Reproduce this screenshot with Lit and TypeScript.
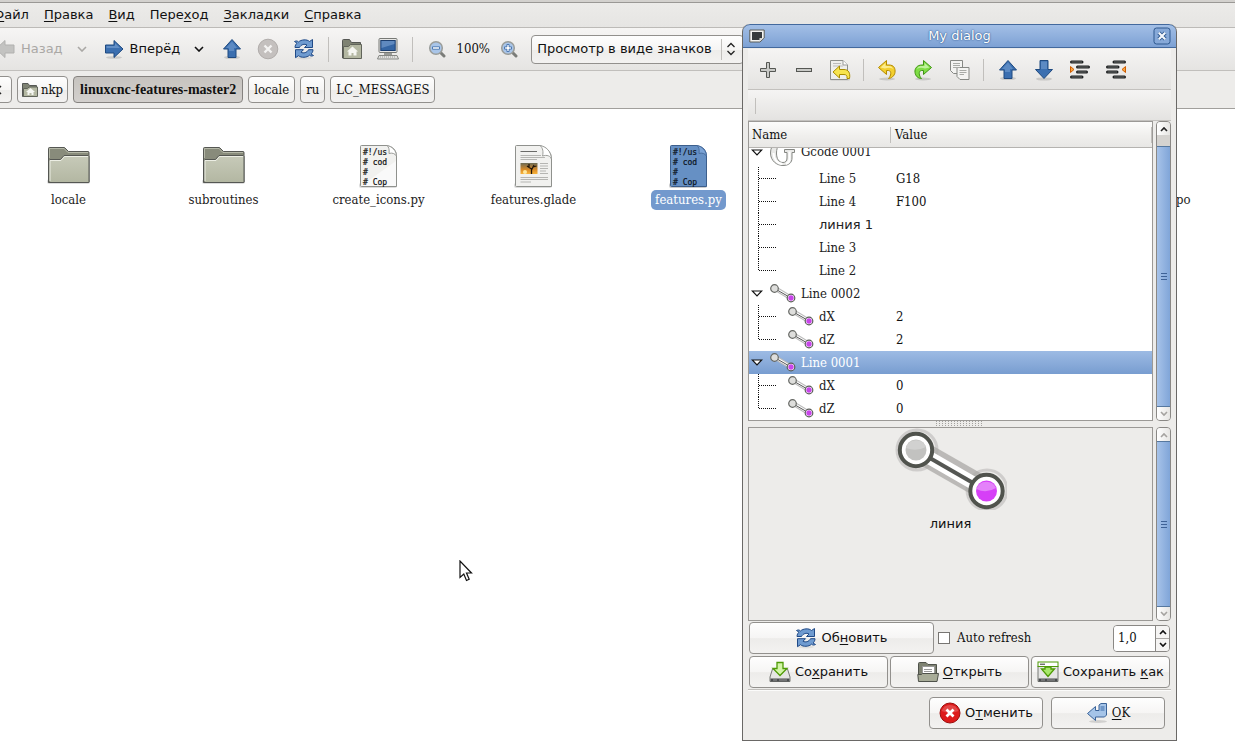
import { LitElement, html, css, svg, nothing, TemplateResult } from "lit";
import { customElement, property } from "lit/decorators.js";
import { classMap } from "lit/directives/class-map.js";

const blueArrow = "fill:#3b6fb0;stroke:#1f4a80;stroke-linejoin:round";

const glyphs: Record<string, { w: number; h: number; body: TemplateResult }> = {
  back: { w: 20, h: 20, body: svg`<path d="M1 10 10 1.500V6H19V14H10V18.500Z" fill="#c3c3c1" stroke="#b1b1af"/>` },
  forward: { w: 20, h: 20, body: svg`<ellipse cx="10" cy="18.500" rx="8" ry="1.300" fill="#0002"/><path d="M19 10 10 1.500V6H1.500V14H10V18.500Z" style=${blueArrow}/><path d="M2.500 7H11V4L16 9H2.500Z" fill="#7da5d6" opacity=".6"/>` },
  up: { w: 22, h: 22, body: svg`<ellipse cx="11" cy="19.500" rx="8" ry="1.600" fill="#0002"/><path d="M11 1.500 19.500 11H15V19.500H7V11H2.500Z" style=${blueArrow}/><path d="M11 3.500 16 10H13V13H8V10H5Z" fill="#7da5d6" opacity=".5"/>` },
  down: { w: 22, h: 22, body: svg`<ellipse cx="11" cy="20" rx="8" ry="1.600" fill="#0002"/><path d="M11 19.500 19.500 10.500H15V1.500H7V10.500H2.500Z" style=${blueArrow}/><path d="M8 2.500H14V10H8Z" fill="#7da5d6" opacity=".5"/>` },
  chevron: { w: 10, h: 6, body: svg`<path d="M1 1 5 5 9 1" fill="none" stroke="currentColor" stroke-width="1.600"/>` },
  stop: { w: 22, h: 22, body: svg`<circle cx="11" cy="11" r="9.800" fill="#c4c0be" stroke="#b0acaa"/><path d="M7.500 7.500 14.500 14.500M14.500 7.500 7.500 14.500" stroke="#f4f3f2" stroke-width="2.400"/>` },
  reload: { w: 22, h: 22, body: svg`<ellipse cx="11" cy="20" rx="8" ry="1.500" fill="#0001"/><g fill="#6f9bd0" stroke="#204a87" stroke-linejoin="round"><path d="M1.500 3.500C3.500 2.500 4.500 3 5.500 4 8 1.500 14 1 16.500 3.500L19.500 1.500V9.500H11.500L14 7C11.500 5.500 8 6.500 6.500 9.500H2C2 7.500 3 6 4 5.200Z"/><path d="M20.500 17.500C18.500 18.500 17.500 18 16.500 17.200 14 19.700 8 20 5.500 17.700L2.500 19.700V11.700H10.500L8 14.200C10.500 15.700 14 14.700 15.500 11.700H20C20 13.700 19 15.200 18 16Z"/></g>` },
  home: { w: 22, h: 22, body: svg`<path d="M1.500 20V2.500Q1.500 1.500 2.500 1.500H8.500L10.500 4.500H19.500V20Z" fill="#7e8272" stroke="#555753"/><path d="M2.500 20.500V8.500H7.500L9.500 6.500H20.500V20.500Z" fill="#b4b8a2" stroke="#61645a"/><path d="M11.500 8.500 17 13.500H15.500V17.500H12.500V15H10.500V17.500H7.500V13.500H6Z" fill="#f5f6f1"/>` },
  homeSmall: { w: 16, h: 16, body: svg`<path d="M.5 14.500V1.500H6L7.500 3.500H14.500V14.500Z" fill="#7e8272" stroke="#555753"/><path d="M1.500 14.500V6.500H5.500L7 5H15.500V14.500Z" fill="#b4b8a2" stroke="#61645a"/><path d="M8.500 6 13 10H11.500V13H9.500V11H7.500V13H5.500V10H4Z" fill="#f5f6f1"/>` },
  computer: { w: 24, h: 24, body: svg`<rect x="3" y="1.500" width="18" height="14" rx="1" fill="#e8e8e6" stroke="#777975"/><rect x="4.800" y="3.500" width="14.400" height="10" fill="#3465a4" stroke="#1d3f70"/><path d="M5.500 4H18.500V7L5.500 11Z" fill="#7da1d2" opacity=".6"/><path d="M8 16H16V18H8Z" fill="#999b97"/><path d="M3 18.500H21L22.500 22H1.500Z" fill="#e2e2e0" stroke="#868884"/><path d="M4 20H20" stroke="#9a9c98" stroke-dasharray="1 1"/>` },
  zoomOut: { w: 18, h: 18, body: svg`<path d="M11.500 11.500 16 16" stroke="#7b7d79" stroke-width="3" stroke-linecap="round"/><circle cx="8" cy="8" r="6.300" fill="#a9c5e8" stroke="#9b9d99" stroke-width="1.500"/><path d="M4.500 6.800H11.500V9.200H4.500Z" fill="#fff" stroke="#3465a4" stroke-width=".8"/>` },
  zoomIn: { w: 18, h: 18, body: svg`<path d="M11.500 11.500 16 16" stroke="#7b7d79" stroke-width="3" stroke-linecap="round"/><circle cx="8" cy="8" r="6.300" fill="#a9c5e8" stroke="#9b9d99" stroke-width="1.500"/><path d="M6.900 4.500H9.100V6.900H11.500V9.100H9.100V11.500H6.900V9.100H4.500V6.900H6.900Z" fill="#fff" stroke="#3465a4" stroke-width=".8"/>` },
  updown: { w: 10, h: 14, body: svg`<path d="M1.500 5 5 1.500 8.500 5M1.500 9 5 12.500 8.500 9" fill="none" stroke="#222" stroke-width="1.300"/>` },
  left: { w: 6, h: 10, body: svg`<path d="M5 1 1 5 5 9" fill="none" stroke="#222" stroke-width="1.500"/>` },
  folder: { w: 48, h: 48, body: svg`<defs><linearGradient id="f" x1="0" y1="0" x2="0" y2="1"><stop offset="0" stop-color="#c7cab9"/><stop offset="1" stop-color="#b3b7a2"/></linearGradient></defs><rect x="2" y="38" width="43" height="5" rx="2.500" fill="#0002"/><path d="M3.500 41.500V7.500Q3.500 6.500 4.500 6.500H19.500L23.500 10.500H43Q44 10.500 44 11.500V41.500Z" fill="#888b7b" stroke="#555753"/><path d="M4.500 17V7.500H19L23 11.500H43" fill="none" stroke="#b5b8a8"/><path d="M4 41.500V19.500L5 18.500H15.500L19 14.500H43L44 15.500V40.500L43 41.500Z" fill="url(#f)" stroke="#555753"/><path d="M5 40V19.500H16L19.500 15.500H43" fill="none" stroke="#eceee4"/>` },
  script: { w: 48, h: 48, body: svg`<rect x="4" y="42" width="38" height="5" rx="2" fill="#0002"/><path d="M6.500 4.500H32Q41.500 6.500 41.500 15V45.500H6.500Q5.500 45.500 5.500 44.500V5.500Q5.500 4.500 6.500 4.500Z" fill="#f1f1ef" stroke="#8f918d"/><path d="M6 45 41 20V45Z" fill="#fff" opacity=".6"/><path d="M32 4.500C34 6 34.500 9 34 12.500 37 11.500 40 12.500 41.500 15 41 9 37 5.500 32 4.500Z" fill="#fff" stroke="#9c9e9a"/><g font-family="DejaVu Sans Mono,monospace" font-size="8" fill="#111" stroke="#111" stroke-width=".2"><text x="8" y="14">#!/us</text><text x="8" y="24"># cod</text><text x="8" y="34">#</text><text x="8" y="44"># Cop</text></g>` },
  scriptSelected: { w: 48, h: 48, body: svg`<rect x="4" y="42" width="38" height="5" rx="2" fill="#0003"/><path d="M6.500 4.500H32Q41.500 6.500 41.500 15V45.500H6.500Q5.500 45.500 5.500 44.500V5.500Q5.500 4.500 6.500 4.500Z" fill="#6690c4" stroke="#3d5f8c"/><path d="M32 4.500C34 6 34.500 9 34 12.500 37 11.500 40 12.500 41.500 15 41 9 37 5.500 32 4.500Z" fill="#7ba3d6" stroke="#4a6f9f"/><g font-family="DejaVu Sans Mono,monospace" font-size="8" fill="#0c141e" stroke="#0c141e" stroke-width=".2"><text x="8" y="14">#!/us</text><text x="8" y="24"># cod</text><text x="8" y="34">#</text><text x="8" y="44"># Cop</text></g>` },
  document: { w: 48, h: 48, body: svg`<defs><linearGradient id="s" x1="0" y1="0" x2="0" y2="1"><stop offset="0" stop-color="#6b6a55"/><stop offset=".6" stop-color="#d98b27"/><stop offset="1" stop-color="#f9b53a"/></linearGradient></defs><rect x="4" y="42" width="38" height="5" rx="2" fill="#0002"/><path d="M6.500 4.500H30Q41.500 8 41.500 18V45.500H6.500Q5.500 45.500 5.500 44.500V5.500Q5.500 4.500 6.500 4.500Z" fill="#f1f1ef" stroke="#8f918d"/><path d="M30 4.500C33 7 33.500 11 32.500 15 37 13.500 40.500 15 41.500 18 41 10 36 5.500 30 4.500Z" fill="#fff" stroke="#9c9e9a"/><path d="M10.500 10.500H27" stroke="#6a6a68"/><path d="M10.500 14.500H31M10.500 16.500H35M10.500 18.500H27M30 22.500H38M30 25H38M30 27.500H38M30 30H36M30 32.500H38M10.500 36.500H38M10.500 38.500H38M10.500 41H21" stroke="#b5b5b2"/><rect x="10.500" y="22" width="17" height="11" fill="url(#s)"/><circle cx="15" cy="31" r="2" fill="#ffe9a0"/><path d="M21.500 33V28L17 25M21.500 29 24 24M23 26 26.500 25M19 26.500V23" stroke="#22160a" stroke-width="1.300" fill="none"/>` },
  window: { w: 16, h: 14, body: svg`<path d="M.8 1H15.200V9L11 13H.8Z" fill="#f3f3f1" stroke="#5b5d59"/><path d="M3 3H13V8.500L10.500 11H3Z" fill="#363a3c"/><path d="M10.500 12.500V9H14.500Z" fill="#d5d6d2"/>` },
  close: { w: 18, h: 18, body: svg`<rect x="1" y="1" width="16" height="16" rx="2.500" fill="#87a9d8" stroke="#2f588f"/><path d="M5.800 5.800 12.200 12.200M12.200 5.800 5.800 12.200" stroke="#2f588f" stroke-width="4"/><path d="M5.800 5.800 12.200 12.200M12.200 5.800 5.800 12.200" stroke="#f5f8fc" stroke-width="2.200"/>` },
  plus: { w: 22, h: 22, body: svg`<path d="M9.500 3.500H12.500V9.500H18.500V12.500H12.500V18.500H9.500V12.500H3.500V9.500H9.500Z" fill="#c9cac7" stroke="#555753"/>` },
  minus: { w: 22, h: 22, body: svg`<rect x="3.500" y="9.500" width="15" height="3" fill="#c9cac7" stroke="#555753"/>` },
  revert: { w: 22, h: 22, body: svg`<rect x="1" y="18" width="20" height="3.500" rx="1.500" fill="#0002"/><path d="M1.500 1.500H14L18.500 6V20.500H1.500Z" fill="#eeeeec" stroke="#8d8f8b"/><path d="M4 4.500H12M4 7H14" stroke="#bbb"/><path d="M14 1.500V6H18.500" fill="#fff" stroke="#999"/><path d="M4 13 10.500 7V10.500H15C19.500 10.500 21.500 14 20.500 19.500L18 19.500C18.500 16.500 17 15.500 15 15.500H10.500V19Z" fill="#f7e44e" stroke="#a98c00" stroke-linejoin="round"/>` },
  undo: { w: 22, h: 22, body: svg`<ellipse cx="10" cy="20" rx="8" ry="1.500" fill="#0002"/><path d="M1.500 8.500 9.500 1.500V6H12C17 6 18.500 9.500 18 13.500 17.500 17 14 19.500 11.500 19.500 14 17 15 12 11.500 11.500H9.500V15.500Z" fill="#f3cf2f" stroke="#b38a00" stroke-linejoin="round"/><path d="M3.500 8.500 8.500 4V7H12Q15 7 16 10Q13 8 8 9.500Z" fill="#fdf2a6" opacity=".8"/>` },
  redo: { w: 22, h: 22, body: svg`<ellipse cx="10" cy="20" rx="8" ry="1.500" fill="#0002"/><path d="M18.500 8.500 10.500 1.500V6H9C4 6 1.500 9.500 2 13.500 2.500 17 5 19.500 8.500 19.500 6 17 5 12 8.500 11.500H10.500V15.500Z" fill="#7fdd45" stroke="#3f9412" stroke-linejoin="round"/><path d="M16.500 8.500 11.500 4V7H8Q5 7 4 10Q7 8 12 9.500Z" fill="#d0f7b0" opacity=".8"/>` },
  copy: { w: 22, h: 22, body: svg`<g fill="#f4f4f2" stroke="#868884"><path d="M1.500 1.500H13.500V14.500H4.500L1.500 11.500Z"/><path d="M8 8.500H20V20.500H11L8 17.500Z"/></g><path d="M4 4.500H11M4 6.500H11M4 8.500H11M10.500 11.500H17.500M10.500 13.500H17.500M10.500 15.500H15" stroke="#a9aba7"/>` },
  indent: { w: 22, h: 22, body: svg`<g stroke="#1c1e1f" stroke-width="3" stroke-linecap="round"><path d="M2.500 3H13M8.500 8H19.500M8.500 13H17.500M2.500 18H13"/></g><g stroke="#6b6e6f"><path d="M2.500 3H13M8.500 8H19.500M8.500 13H17.500M2.500 18H13"/></g><path d="M1.500 7.500 5 10.500 1.500 13.500Z" fill="#f9a53e" stroke="#ce5c00"/>` },
  outdent: { w: 22, h: 22, body: svg`<g stroke="#1c1e1f" stroke-width="3" stroke-linecap="round"><path d="M9 3H19.500M2.500 8H13M2.500 13H12M9 18H19.500"/></g><g stroke="#6b6e6f"><path d="M9 3H19.500M2.500 8H13M2.500 13H12M9 18H19.500"/></g><path d="M20.500 7.500 17 10.500 20.500 13.500Z" fill="#f9a53e" stroke="#ce5c00"/>` },
  expander: { w: 12, h: 8, body: svg`<path d="M1.200 1H10.800L6 6Z" fill="#fff" stroke="#111" stroke-width="1.200"/>` },
  gcode: { w: 26, h: 26, body: svg`<path d="M17.500 1.500C8 -2 .5 4 .5 13 .5 21 7 25.500 13 25.500 19 25.500 22 22.500 22 18V12.500H24.500V9.500H14.500V12.500H17V18C17 21 15.500 22.500 13 22.500 9 22.500 6.500 19 6.500 13 6.500 6 10 3 15.500 5Z" fill="#e9e9e7" stroke="#858783"/><path d="M3.500 13C3.500 19 7 23.500 12.500 24M19.500 11.500V19C19.500 21 18 23 16 24" fill="none" stroke="#fff" stroke-width="2"/>` },
  line: { w: 26, h: 20, body: svg`<path d="M4.500 4 21 14" stroke="#bbb" stroke-width="4.500"/><path d="M4.500 4 21 14" stroke="#fff" stroke-width="2.600"/><path d="M4.500 4.500 21 14" stroke="#555" stroke-width="1"/><circle cx="4.500" cy="4.500" r="3.800" fill="#dededc" stroke="#666864" stroke-width="1.200"/><circle cx="21" cy="14" r="3.800" fill="#fff" stroke="#5a5c58" stroke-width="1.200"/><circle cx="21" cy="14" r="2.700" fill="#c845ea"/>` },
  lineBig: { w: 112, h: 82, body: svg`<g stroke="#bbb9b7" fill="none"><circle cx="22" cy="22" r="20" stroke-width="3" opacity=".6"/><circle cx="92" cy="62" r="20" stroke-width="3" opacity=".6"/><path d="M22 22 92 62" stroke-width="23" stroke="#aaa8a6" opacity=".75"/></g><path d="M21 22 92 63" stroke="#fff" stroke-width="13"/><path d="M21 22 92 63" stroke="#555753" stroke-width="4"/><g stroke="#50534d" stroke-width="4" fill="#fff"><circle cx="21" cy="22" r="16.200"/><circle cx="91.500" cy="63" r="16.200"/></g><circle cx="21" cy="22" r="10.500" fill="#c2c2c0"/><circle cx="91.500" cy="63" r="10.500" fill="#d63ff7"/><path d="M11 20A10.500 10.500 0 0 1 31 19Q21 24 11 20Z" fill="#fff" opacity=".25"/><path d="M81.500 61A10.500 10.500 0 0 1 101 60Q91 66 81.500 61Z" fill="#fff" opacity=".35"/>` },
  grip: { w: 48, h: 6, body: svg`<path d="M0 .5H48M0 2.500H48M0 4.500H48" stroke="#a3a19e" stroke-dasharray="1 2"/>` },
  save: { w: 22, h: 22, body: svg`<path d="M3.500 8H18.500L21 16V20.500H1V16Z" fill="#e5e5e3" stroke="#777975"/><path d="M1.500 17.500H20.500V20.500H1.500Z" fill="#4a4d4f"/><path d="M4 19H8M10 19H18" stroke="#999"/><path d="M8 1.500H14V7.500H18L11 14.500 4 7.500H8Z" fill="#d3f5a8" stroke="#4e9a06" stroke-width="1.300"/>` },
  saveAs: { w: 22, h: 22, body: svg`<path d="M1 5V20.500H21V5Z" fill="#e5e5e3" stroke="#777975"/><path d="M1.500 17.500H20.500V20.500H1.500Z" fill="#4a4d4f"/><path d="M4 19H8M10 19H18" stroke="#999"/><rect x="1" y="1" width="20" height="4.500" fill="#fff" stroke="#4e9a06"/><path d="M3 3.200H8" stroke="#333"/><path d="M4.500 8H8V6H14V8H17.500L11 15.500Z" fill="#a8e86a" stroke="#4e9a06" stroke-width="1.300"/>` },
  open: { w: 22, h: 22, body: svg`<path d="M1.500 18V2.500Q1.500 1.500 2.500 1.500H9L11 3.500H19.500V16H1.500Z" fill="#7e8272" stroke="#4f524b"/><rect x="5.500" y="5.500" width="12" height="11" fill="#fff" stroke="#999"/><path d="M7 8.500H15M7 10.500H15" stroke="#999"/><path d="M1.500 20.500 .8 13.500H4.500L5.500 12.500H21.500L20 20.500Z" fill="#a8ac98" stroke="#4f524b"/>` },
  cancel: { w: 22, h: 22, body: svg`<circle cx="11" cy="11" r="10" fill="#dd1a1a" stroke="#9c0d0d"/><path d="M2.500 9A9 9 0 0 1 19.500 9Q11 12 2.500 9Z" fill="#fff" opacity=".2"/><path d="M7.500 7.500 14.500 14.500M14.500 7.500 7.500 14.500" stroke="#fff" stroke-width="2.800"/>` },
  ok: { w: 22, h: 22, body: svg`<ellipse cx="12" cy="19.500" rx="9" ry="1.500" fill="#0002"/><path d="M1.500 11.500 9.500 4.500V8.500H13V3L15 1.500H20.500V13L18.500 15H9.500V18.500Z" fill="#a5c4e8" stroke="#3a6398" stroke-linejoin="round"/><path d="M14.500 4H18.500V9H14.500Z" fill="#6f97c8"/>` },
  cursor: { w: 14, h: 22, body: svg`<path d="M1 1V17.500L4.800 14 7.500 20.500 10.200 19.200 7.500 13H12.500Z" fill="#fff" stroke="#111" stroke-width="1.200"/>` },
  arrowUp: { w: 8, h: 6, body: svg`<path d="M1 5 4 2 7 5" fill="none" stroke="currentColor" stroke-width="1.600"/>` },
  arrowDown: { w: 8, h: 6, body: svg`<path d="M1 1 4 4 7 1" fill="none" stroke="currentColor" stroke-width="1.600"/>` },
  branch: { w: 27, h: 23, body: svg`<path d="M9.500 0V23M10 11.500H27" stroke="#111" stroke-dasharray="1 1" fill="none"/>` },
  branchEnd: { w: 27, h: 23, body: svg`<path d="M9.500 0V12M10 11.500H27" stroke="#111" stroke-dasharray="1 1" fill="none"/>` },
};

const icon = (name: string) => {
  const g = glyphs[name];
  return html`<svg width=${g.w} height=${g.h} viewBox="0 0 ${g.w} ${g.h}" aria-hidden="true">${g.body}</svg>`;
};

/** Renders a label whose mnemonic letter is preceded by an underscore. */
const mnemonic = (label: string) => {
  const i = label.indexOf("_");
  return i < 0 ? label : html`${label.slice(0, i)}<u>${label[i + 1]}</u>${label.slice(i + 2)}`;
};

const shared = css`
  * { box-sizing: border-box; }
  svg { display: block; flex: none; }
  button, select, input { font: inherit; color: inherit; margin: 0; }
  button { display: flex; align-items: center; justify-content: center; padding: 0; white-space: nowrap; }
  .sans { font: 13px/20px "DejaVu Sans", sans-serif; }
  u { text-underline-offset: 2px; text-decoration-thickness: 1px; }
  .flat { border: 0; background: none; }
  .raised {
    border: 1px solid #92908d;
    border-radius: 4px;
    background: linear-gradient(#fefefe, #f6f5f4 50%, #edecea 52%, #f3f2f1);
  }
`;

@customElement("scroll-bar")
class ScrollBar extends LitElement {
  @property({ type: Number }) lead = 0;
  @property({ type: Boolean }) inactive = false;

  static styles = [shared, css`
    :host { display: flex; flex-direction: column; width: 15px; border: 1px solid #8a8885; border-radius: 4px; background: #d5d3d0; overflow: hidden; }
    .step { height: 13px; border: 0; background: linear-gradient(90deg, #fff, #e6e5e3); color: #222; flex: none; }
    .step.dim { color: #a5a3a0; }
    .thumb { flex: 1; display: flex; flex-direction: column; align-items: center; justify-content: center; gap: 2px; border: solid #56789f; border-width: 1px 0; background: linear-gradient(90deg, #a7c3e9, #80a5d8); }
    .grip { width: 6px; height: 1px; background: #3f6296; }
  `];

  render() {
    return html`
      <button class=${classMap({ step: true, dim: this.inactive })} aria-label="Вверх">${icon("arrowUp")}</button>
      <div style="height:${this.lead}px"></div>
      <div class="thumb"><span class="grip"></span><span class="grip"></span><span class="grip"></span></div>
      <button class="step dim" aria-label="Вниз">${icon("arrowDown")}</button>`;
  }
}

interface Row { name: string; value?: string; icon?: string; child?: boolean; last?: boolean; selected?: boolean; sans?: boolean; clipped?: boolean; }

const rows: Row[] = [
  { name: "Gcode 0001", icon: "gcode", clipped: true },
  { name: "Line 5", value: "G18", child: true },
  { name: "Line 4", value: "F100", child: true },
  { name: "линия 1", child: true, sans: true },
  { name: "Line 3", child: true },
  { name: "Line 2", child: true, last: true },
  { name: "Line 0002", icon: "line" },
  { name: "dX", value: "2", icon: "line", child: true },
  { name: "dZ", value: "2", icon: "line", child: true, last: true },
  { name: "Line 0001", icon: "line", selected: true },
  { name: "dX", value: "0", icon: "line", child: true },
  { name: "dZ", value: "0", icon: "line", child: true, last: true },
];

@customElement("feature-dialog")
class FeatureDialog extends LitElement {
  static styles = [shared, css`
    :host { display: flex; flex-direction: column; background: #edecea; border: 1px solid #6a6866; border-top: 0; border-radius: 8px 8px 0 0; overflow: hidden; }
    .title { display: grid; grid-template-columns: 28px 1fr 28px; align-items: center; justify-items: center; height: 24px; margin: 0 -1px; border: 1px solid #43699d; border-radius: 8px 8px 0 0; background: linear-gradient(#a3bfe6, #7da1d4); color: #fff; }
    .title h1 { margin: 0; font-weight: 400; text-shadow: 0 0 1px #2f588f, 0 0 2px #2f588f; }
    .body { flex: 1; display: flex; flex-direction: column; padding: 1px 5px 11px; min-height: 0; }
    .tools { display: flex; align-items: center; height: 41px; padding: 1px 0 0 2px; border-bottom: 1px solid #c3c1be; background: linear-gradient(#f5f4f3, #e4e3e1); }
    .tools button { width: 36px; height: 36px; }
    .tools.slim { height: 31px; }
    .sep { width: 1px; height: 22px; margin: 0 6px 0 5px; background: #c1bfbc; }
    .slim .sep { height: 16px; }
    .pane { display: flex; gap: 3px; }
    .view { flex: 1; border: 1px solid #9b9996; min-width: 0; }
    .tree { background: #fff; }
    table { width: 100%; border-collapse: separate; border-spacing: 0; table-layout: fixed; }
    th { height: 26px; padding: 0; text-align: left; font-weight: 400; border-bottom: 1px solid #b5b3b0; background: linear-gradient(#fcfcfb, #f0efed 55%, #e8e7e5); }
    th:first-child { width: 142px; }
    th span { display: block; padding-left: 3px; border-right: 1px solid #c1bfbc; line-height: 16px; }
    th + th span { padding-left: 4px; }
    td { padding: 0; line-height: 20px; }
    .value { padding-left: 5px; }
    .node { display: flex; align-items: center; height: 23px; }
    .clipped { height: 19px; align-items: flex-end; overflow: hidden; }
    .clipped > .pic { margin-bottom: 1px; }
    .clipped > .twist { margin-bottom: 10px; }
    .clipped > .label { margin-bottom: 5px; }
    .twist { width: 21px; padding-left: 2px; }
    .label { padding-left: 4px; color: #222; }
    .pic { width: 27px; }
    .child .pic { width: 39px; padding-left: 12px; }
    .selected { background: linear-gradient(#9dbbe4, #789dd0); }
    .selected .label { color: #fff; }
    .handle { align-self: center; }
    .preview { flex: 1; min-height: 0; }
    .preview .view { display: flex; flex-direction: column; align-items: center; gap: 4px; }
    .form { display: flex; align-items: center; padding: 0 1px; margin-top: 1px; }
    .form .raised { width: 185px; }
    .raised { height: 32px; gap: 4px; }
    .check { display: flex; align-items: center; gap: 7px; margin-left: 4px; flex: 1; }
    .check input { appearance: none; width: 12px; height: 12px; border: 1px solid #777572; background: #fff; }
    .spin { display: flex; height: 27px; border: 1px solid #8a8885; border-radius: 4px; overflow: hidden; }
    .spin input { width: 41px; border: 0; padding: 0 4px; background: #fff; }
    .arrows { display: flex; flex-direction: column; width: 14px; border-left: 1px solid #8a8885; background: #f5f4f3; }
    .arrows button { flex: 1; height: auto; border: 0; background: none; }
    .arrows button + button { border-top: 1px solid #a9a7a4; }
    .files { display: grid; grid-template-columns: repeat(3, 1fr); gap: 2px; padding: 0 1px; margin-top: 2px; }
    .actions { display: flex; justify-content: flex-end; gap: 8px; margin-top: 1px; padding: 7px 6px 0; border-top: 1px solid #c1bfbc; box-shadow: inset 0 1px #fbfbfa; }
    .actions .raised { width: 114px; }
  `];

  private tool(name: string, label: string) {
    return html`<button class="flat" aria-label=${label}>${icon(name)}</button>`;
  }

  private row(r: Row) {
    const lead = r.child
      ? html`${icon(r.last ? "branchEnd" : "branch")}<span class="pic">${r.icon ? icon(r.icon) : nothing}</span>`
      : html`<span class="twist">${icon("expander")}</span><span class="pic">${icon(r.icon!)}</span>`;
    return html`<tr class=${classMap({ selected: !!r.selected })}>
      <td><div class=${classMap({ node: true, child: !!r.child, clipped: !!r.clipped })}>
        ${lead}<span class=${classMap({ label: true, sans: !!r.sans })}>${r.name}</span></div></td>
      <td class="value">${r.value ?? nothing}</td></tr>`;
  }

  render() {
    return html`
      <div class="title">${icon("window")}<h1 class="sans">My dialog</h1><button class="flat" aria-label="Закрыть">${icon("close")}</button></div>
      <div class="body">
        <div class="tools">
          ${this.tool("plus", "Добавить")}${this.tool("minus", "Удалить")}${this.tool("revert", "Вернуть")}
          <span class="sep"></span>
          ${this.tool("undo", "Отменить действие")}${this.tool("redo", "Повторить")}${this.tool("copy", "Копировать")}
          <span class="sep"></span>
          ${this.tool("up", "Выше")}${this.tool("down", "Ниже")}${this.tool("indent", "Увеличить отступ")}${this.tool("outdent", "Уменьшить отступ")}
        </div>
        <div class="tools slim"><span class="sep"></span></div>
        <div class="pane">
          <div class="view tree">
            <table>
              <thead><tr><th><span>Name</span></th><th><span>Value</span></th></tr></thead>
              <tbody>${rows.map((r) => this.row(r))}</tbody>
            </table>
          </div>
          <scroll-bar .lead=${11}></scroll-bar>
        </div>
        <div class="handle">${icon("grip")}</div>
        <div class="pane preview">
          <div class="view">${icon("lineBig")}<span class="sans">линия</span></div>
          <scroll-bar inactive></scroll-bar>
        </div>
        <div class="form">
          <button class="raised sans">${icon("reload")}<span>${mnemonic("Об_новить")}</span></button>
          <label class="check"><input type="checkbox" />Auto refresh</label>
          <div class="spin">
            <input type="text" value="1,0" aria-label="Интервал" />
            <div class="arrows"><button aria-label="Больше">${icon("arrowUp")}</button><button aria-label="Меньше">${icon("arrowDown")}</button></div>
          </div>
        </div>
        <div class="files">
          <button class="raised sans">${icon("save")}<span>${mnemonic("Со_хранить")}</span></button>
          <button class="raised sans">${icon("open")}<span>${mnemonic("_Открыть")}</span></button>
          <button class="raised sans">${icon("saveAs")}<span>${mnemonic("Сохранить _как")}</span></button>
        </div>
        <div class="actions">
          <button class="raised sans">${icon("cancel")}<span>${mnemonic("О_тменить")}</span></button>
          <button class="raised">${icon("ok")}<span>${mnemonic("_OK")}</span></button>
        </div>
      </div>`;
  }
}

@customElement("app-root")
class AppRoot extends LitElement {
  static styles = [shared, css`
    :host { display: block; position: relative; min-height: 100vh; overflow: hidden; background: #fff; color: #111; font: 13px/20px "DejaVu Serif Condensed", "DejaVu Serif", serif; }
    .filer { margin-left: -14px; }
    .edge { height: 3px; background: #d3d1ce; border-bottom: 1px solid #9a9895; }
    .menu { display: flex; gap: 1px; height: 25px; align-items: center; background: linear-gradient(#ecebe9, #e6e5e3); border-bottom: 1px solid #bcbab7; }
    .menu button { padding: 0 7px; }
    .toolbar { display: flex; align-items: center; height: 43px; padding-left: 9px; border-bottom: 1px solid #c1bfbc; background: linear-gradient(#f6f5f4, #e5e4e2); }
    .toolbar button { height: 36px; }
    .labelled { gap: 6px; padding-right: 4px; }
    .drop + .labelled { padding-left: 7px; }
    .dim { color: #aaa8a5; }
    .drop { width: 30px; }
    .tool { width: 36px; }
    .sep { width: 1px; height: 25px; margin: 0 5px 0 6px; background: #c1bfbc; }
    .zoom { width: 34px; text-align: center; }
    .near { width: 38px; }
    .small { width: 36px; }
    .mode { display: grid; margin-left: 3px; width: 213px; }
    .mode select, .mode .marks { grid-area: 1 / 1; }
    .mode select { appearance: none; height: 29px; padding: 0 28px 0 5px; }
    .marks { display: flex; align-items: center; justify-self: end; align-self: center; height: 21px; width: 23px; padding-left: 4px; border-left: 1px solid #c1bfbc; pointer-events: none; }
    .path { display: flex; align-items: center; gap: 5px; height: 38px; border-bottom: 1px solid #a19f9c; background: #edecea; }
    .path button { height: 27px; padding: 0 5px; gap: 3px; }
    .path .place { padding: 0 4px; }
    .path .prev { width: 26px; padding-left: 4px; }
    .path .current { padding: 0 6px; border-color: #85827f; background: linear-gradient(#c6c3bf, #d3d0cd); font: bold 14px/20px "Liberation Serif", serif; }
    .icons { display: grid; grid-template-columns: repeat(auto-fill, 155px); padding: 32px 0 0 5px; }
    .item { display: flex; flex-direction: column; align-items: center; gap: 1px; color: #222; text-decoration: none; }
    .item span { padding: 0 4px; border-radius: 5px; }
    .item.selected span { background: #7399cd; color: #fff; }
    .item.far { grid-column: 8; }
    .far span { width: 82px; margin-top: 49px; text-align: right; }
    feature-dialog { position: absolute; left: 742px; top: 24px; bottom: 0; width: 435px; }
    .pointer { position: absolute; left: 459px; top: 560px; }
  `];

  private files = [
    { name: "locale", icon: "folder" },
    { name: "subroutines", icon: "folder" },
    { name: "create_icons.py", icon: "script" },
    { name: "features.glade", icon: "document" },
    { name: "features.py", icon: "scriptSelected", selected: true },
  ];

  render() {
    return html`
      <main class="filer">
        <div class="edge"></div>
        <nav class="menu sans">
          ${["_Файл", "_Правка", "_Вид", "Пере_ход", "_Закладки", "_Справка"].map((m) => html`<button class="flat"><span>${mnemonic(m)}</span></button>`)}
        </nav>
        <div class="toolbar">
          <button class="flat labelled sans dim" disabled>${icon("back")}Назад</button>
          <button class="flat drop dim" aria-label="История назад">${icon("chevron")}</button>
          <button class="flat labelled sans">${icon("forward")}Вперёд</button>
          <button class="flat drop" aria-label="История вперёд">${icon("chevron")}</button>
          <button class="flat small" aria-label="Вверх">${icon("up")}</button>
          <button class="flat tool" aria-label="Остановить">${icon("stop")}</button>
          <button class="flat tool" aria-label="Обновить">${icon("reload")}</button>
          <span class="sep"></span>
          <button class="flat tool" aria-label="Домой">${icon("home")}</button>
          <button class="flat tool" aria-label="Компьютер">${icon("computer")}</button>
          <span class="sep"></span>
          <button class="flat near" aria-label="Уменьшить">${icon("zoomOut")}</button>
          <span class="zoom">100%</span>
          <button class="flat near" aria-label="Увеличить">${icon("zoomIn")}</button>
          <div class="mode">
            <select class="raised sans" aria-label="Вид"><option>Просмотр в виде значков</option></select>
            <span class="marks">${icon("updown")}</span>
          </div>
        </div>
        <nav class="path">
          <button class="raised prev" aria-label="Назад по пути">${icon("left")}</button>
          <button class="raised place">${icon("homeSmall")}nkp</button>
          <button class="raised current">linuxcnc-features-master2</button>
          <button class="raised">locale</button>
          <button class="raised">ru</button>
          <button class="raised">LC_MESSAGES</button>
        </nav>
        <div class="icons">
          ${this.files.map((f) => html`<a href="#" class=${classMap({ item: true, selected: !!f.selected })}>${icon(f.icon)}<span>${f.name}</span></a>`)}
          <a href="#" class="item far"><span>po</span></a>
        </div>
      </main>
      <div class="pointer">${icon("cursor")}</div>
      <feature-dialog></feature-dialog>`;
  }
}
